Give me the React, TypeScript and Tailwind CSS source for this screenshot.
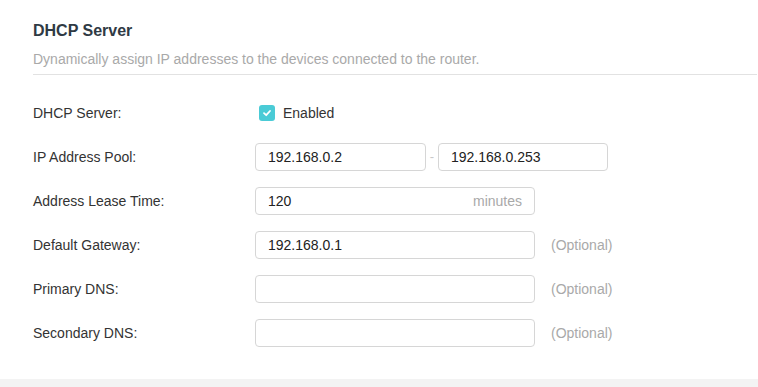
import React from 'react'

const Field = ({ value, width, suffix }: { value?: string; width: string; suffix?: string }) => (
  <div className={`${width} h-[28px] flex items-center justify-between px-[12px] border border-[#d6d6d6] rounded-[4px] bg-white`}>
    <span className="text-[14px] text-[#222]">{value}</span>
    {suffix && <span className="text-[14px] text-[#a9a9a9]">{suffix}</span>}
  </div>
)

const Row = ({ label, children }: { label: string; children: React.ReactNode }) => (
  <div className="h-[44px] flex items-center">
    <div className="w-[222px] text-[14px] text-[#333]">{label}</div>
    <div className="flex items-center">{children}</div>
  </div>
)

const Optional = () => <span className="ml-[16px] text-[14px] text-[#a9a9a9]">(Optional)</span>

export default function App() {
  return (
    <div className="w-[758px] h-[387px] bg-white flex flex-col font-['Liberation_Sans',Arial,sans-serif]">
      <div className="flex-1 pl-[33px] pr-[1px]">
        <div className="pt-[20px] pb-[6px] border-b border-[#e2e2e2]">
          <h1 className="text-[16px] leading-[22px] font-bold text-[#2f3a44]">DHCP Server</h1>
          <p className="mt-[8px] text-[14px] leading-[18px] text-[#a9a9a9]">
            Dynamically assign IP addresses to the devices connected to the router.
          </p>
        </div>
        <div className="pt-[16px]">
          <Row label="DHCP Server:">
            <div className="ml-[4px] w-[16px] h-[16px] rounded-[3px] bg-[#4acbd6] flex items-center justify-center">
              <svg width="10" height="10" viewBox="0 0 10 10" fill="none">
                <path d="M2 5.2L4.2 7.2L8 3" stroke="white" strokeWidth="1.8" strokeLinecap="round" strokeLinejoin="round" />
              </svg>
            </div>
            <span className="ml-[8px] text-[14px] text-[#333]">Enabled</span>
          </Row>
          <Row label="IP Address Pool:">
            <Field value="192.168.0.2" width="w-[171px]" />
            <span className="w-[12px] text-center text-[13px] text-[#c8c8c8]">-</span>
            <Field value="192.168.0.253" width="w-[170px]" />
          </Row>
          <Row label="Address Lease Time:">
            <Field value="120" width="w-[280px]" suffix="minutes" />
          </Row>
          <Row label="Default Gateway:">
            <Field value="192.168.0.1" width="w-[280px]" />
            <Optional />
          </Row>
          <Row label="Primary DNS:">
            <Field width="w-[280px]" />
            <Optional />
          </Row>
          <Row label="Secondary DNS:">
            <Field width="w-[280px]" />
            <Optional />
          </Row>
        </div>
      </div>
      <div className="h-[8px] bg-[#f3f3f3]" />
    </div>
  )
}
